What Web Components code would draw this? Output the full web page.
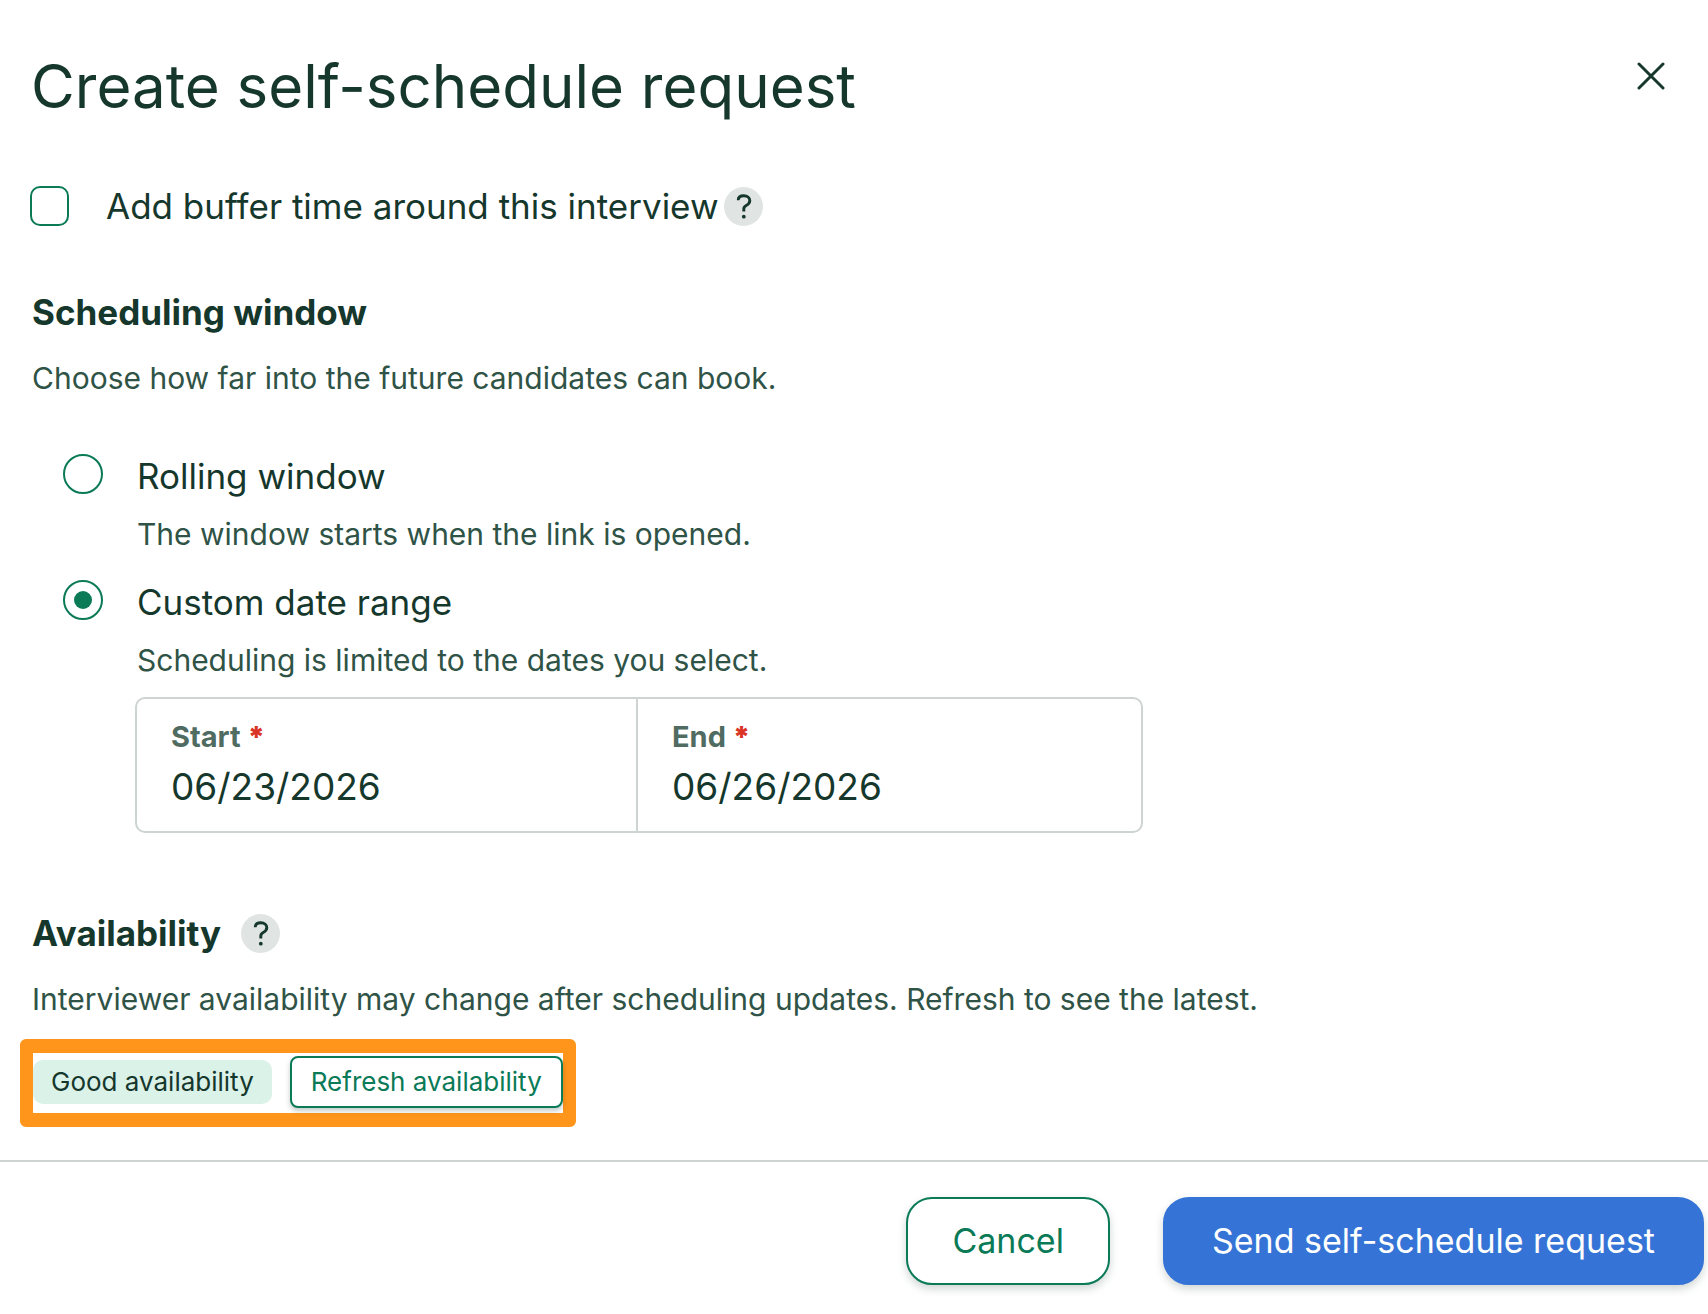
<!DOCTYPE html>
<html lang="en">
<head>
<meta charset="utf-8">
<meta name="viewport" content="width=device-width, initial-scale=1">
<title>Create self-schedule request</title>
<style>
  :root {
    --ink: #15372c;
    --ink-soft: #2f5346;
    --ink-muted: #506b62;
    --green: #0a7a57;
    --line: #cdd4d2;
    --blue: #3574d6;
  }
  body {
    margin: 0;
    background: #fff;
    color: var(--ink);
    font-family: Inter, "Liberation Sans", sans-serif;
    font-size: 35px;
    line-height: 44px;
  }
</style>
</head>
<body>
<schedule-dialog></schedule-dialog>

<script>
  const define = (name, html, setup) => {
    const template = document.createElement('template');
    template.innerHTML = `<style>*{box-sizing:border-box}</style>${html}`;
    customElements.define(name, class extends HTMLElement {
      connectedCallback() {
        if (this.shadowRoot) return;
        const root = this.attachShadow({ mode: 'open', delegatesFocus: true });
        root.append(template.content.cloneNode(true));
        if (setup) setup(this, root);
      }
    });
  };

  define('help-tip', `
    <style>
      :host { display: inline-flex; flex: none; }
      button { display: flex; width: 39px; height: 39px; padding: 0; border: 0; border-radius: 50%; background: #e0e5e3; color: var(--ink); align-items: center; justify-content: center; }
      svg { display: block; }
    </style>
    <button type="button" aria-label="Help">
      <svg width="39" height="39" viewBox="0 0 39 39" fill="none" aria-hidden="true">
        <path d="M14.2 13.2C14.2 10.2 16.6 8.7 19.8 8.7C23.2 8.7 25.8 10.7 25.8 13.6C25.8 16.4 24 17.6 22.2 18.5C20.4 19.4 19.8 20.2 19.8 22V24.4" stroke="currentColor" stroke-width="2.9"/>
        <circle cx="19.8" cy="29.7" r="1.9" fill="currentColor"/>
      </svg>
    </button>`);

  define('check-field', `
    <style>
      :host { display: flex; align-items: center; gap: 5px; }
      label { display: flex; align-items: center; gap: 37px; line-height: 40px; }
      input { appearance: none; flex: none; width: 39px; height: 40px; margin: 0; border: 2px solid var(--green); border-radius: 10px; background: #fff; }
      input:checked { background: var(--green); }
    </style>
    <label for="box"><input id="box" type="checkbox"><span><slot></slot></span></label>
    <slot name="help"></slot>`);

  define('section-block', `
    <style>
      :host { display: block; padding-left: 2px; }
      header { display: flex; align-items: center; gap: 20px; }
      h2 { margin: 0; font-size: 35px; line-height: 44px; font-weight: 700; }
      p { margin: 24px 0 0; font-size: 30px; line-height: 40px; color: var(--ink-soft); }
    </style>
    <header><h2><slot name="title"></slot></h2><slot name="help"></slot></header>
    <p><slot name="description"></slot></p>
    <slot></slot>`);

  define('radio-options', `
    <style>
      :host { display: flex; flex-direction: column; gap: 26px; margin-top: 56px; padding-left: 31px; }
      .option { display: grid; grid-template-columns: 40px 1fr; column-gap: 34px; }
      input { appearance: none; display: grid; place-items: center; width: 40px; height: 40px; margin: 0; border: 2px solid var(--green); border-radius: 50%; background: #fff; }
      input:checked::before { content: ""; width: 18px; height: 18px; border-radius: 50%; background: var(--green); }
      p { grid-column: 2; margin: 16px 0 0; font-size: 30px; line-height: 40px; color: var(--ink-soft); }
      slot { display: block; grid-column: 2; margin: 17px 0 0 -2px; }
    </style>
    <div class="option">
      <input id="rolling" type="radio" name="window" aria-describedby="rolling-note">
      <label for="rolling">Rolling window</label>
      <p id="rolling-note">The window starts when the link is opened.</p>
    </div>
    <div class="option">
      <input id="custom" type="radio" name="window" aria-describedby="custom-note" checked>
      <label for="custom">Custom date range</label>
      <p id="custom-note">Scheduling is limited to the dates you select.</p>
      <slot></slot>
    </div>`);

  define('date-range', `
    <style>
      :host { display: flex; box-sizing: border-box; max-width: 1008px; border: 2px solid var(--line); border-radius: 10px; }
      ::slotted(date-field) { flex: 1; min-width: 0; }
      ::slotted(date-field:first-child) { flex: 0 1 501px; border-right: 2px solid var(--line); }
    </style>
    <slot></slot>`);

  define('date-field', `
    <style>
      :host { display: flex; box-sizing: border-box; flex-direction: column; gap: 10px; padding: 20px 34px 22px; }
      label { font-size: 29px; line-height: 36px; font-weight: 700; color: var(--ink-muted); }
      b { color: #da3427; }
      input { width: 100%; height: 44px; padding: 0; border: 0; outline: 0; background: none; color: inherit; font: inherit; font-size: 37px; line-height: 44px; }
    </style>
    <label for="date"><span></span> <b>*</b></label>
    <input id="date" type="text" inputmode="numeric" required>`,
    (host, root) => {
      root.querySelector('span').textContent = host.getAttribute('label');
      root.querySelector('input').value = host.getAttribute('value');
    });

  define('status-badge', `
    <style>
      :host { display: block; padding: 0 18px; border-radius: 10px; background: #dbf2e9; font-size: 26px; line-height: 44px; white-space: nowrap; }
    </style>
    <slot></slot>`);

  define('action-button', `
    <style>
      :host { display: block; }
      button { display: block; height: 88px; padding: 0 44px; border: 2px solid var(--green); border-radius: 26px; background: #fff; color: var(--green); font: inherit; font-size: 34px; white-space: nowrap; box-shadow: 0 4px 8px rgba(21, 55, 44, .2); }
      :host([kind="primary"]) button { padding: 0 47px; border-color: var(--blue); background: var(--blue); color: #fff; }
      :host([kind="small"]) button { height: 52px; padding: 0 19px; border-radius: 8px; font-size: 26px; line-height: 44px; box-shadow: 0 3px 5px rgba(21, 55, 44, .25); }
    </style>
    <button type="button"><slot></slot></button>`);

  define('highlight-frame', `
    <style>
      :host { display: flex; width: fit-content; align-items: center; gap: 18px; margin: 20px 0 0 -12px; padding: 3px 0 5px; border: solid #ff951b; border-width: 14px 13px; border-radius: 6px; }
    </style>
    <slot></slot>`);

  define('schedule-dialog', `
    <style>
      :host { display: block; }
      .head { display: flex; align-items: flex-start; justify-content: space-between; padding: 50px 31px 0; }
      h1 { margin: 0; font-size: 60px; line-height: 72px; font-weight: 400; }
      .close { display: grid; place-items: center; width: 52px; height: 52px; padding: 0; border: 0; background: none; color: var(--ink); }
      main { padding: 64px 30px 33px; }
      section-block { margin-top: 64px; }
      section-block + section-block { margin-top: 78px; }
      .foot { display: flex; justify-content: flex-end; gap: 53px; padding: 35px 4px 29px; border-top: 2px solid var(--line); }
    </style>
    <div role="dialog" aria-labelledby="heading">
      <div class="head">
        <h1 id="heading">Create self-schedule request</h1>
        <button class="close" type="button" aria-label="Close">
          <svg width="28" height="28" viewBox="0 0 28 28" fill="none" stroke="currentColor" stroke-width="3" stroke-linecap="round" aria-hidden="true"><path d="M2 2L26 26M26 2L2 26"/></svg>
        </button>
      </div>
      <main>
        <check-field>Add buffer time around this interview<help-tip slot="help"></help-tip></check-field>
        <section-block>
          <span slot="title">Scheduling window</span>
          <span slot="description">Choose how far into the future candidates can book.</span>
          <radio-options>
            <date-range>
              <date-field label="Start" value="06/23/2026"></date-field>
              <date-field label="End" value="06/26/2026"></date-field>
            </date-range>
          </radio-options>
        </section-block>
        <section-block>
          <span slot="title">Availability</span>
          <help-tip slot="help"></help-tip>
          <span slot="description">Interviewer availability may change after scheduling updates. Refresh to see the latest.</span>
          <highlight-frame>
            <status-badge>Good availability</status-badge>
            <action-button kind="small">Refresh availability</action-button>
          </highlight-frame>
        </section-block>
      </main>
      <div class="foot">
        <action-button>Cancel</action-button>
        <action-button kind="primary">Send self-schedule request</action-button>
      </div>
    </div>`);
</script>
</body>
</html>
